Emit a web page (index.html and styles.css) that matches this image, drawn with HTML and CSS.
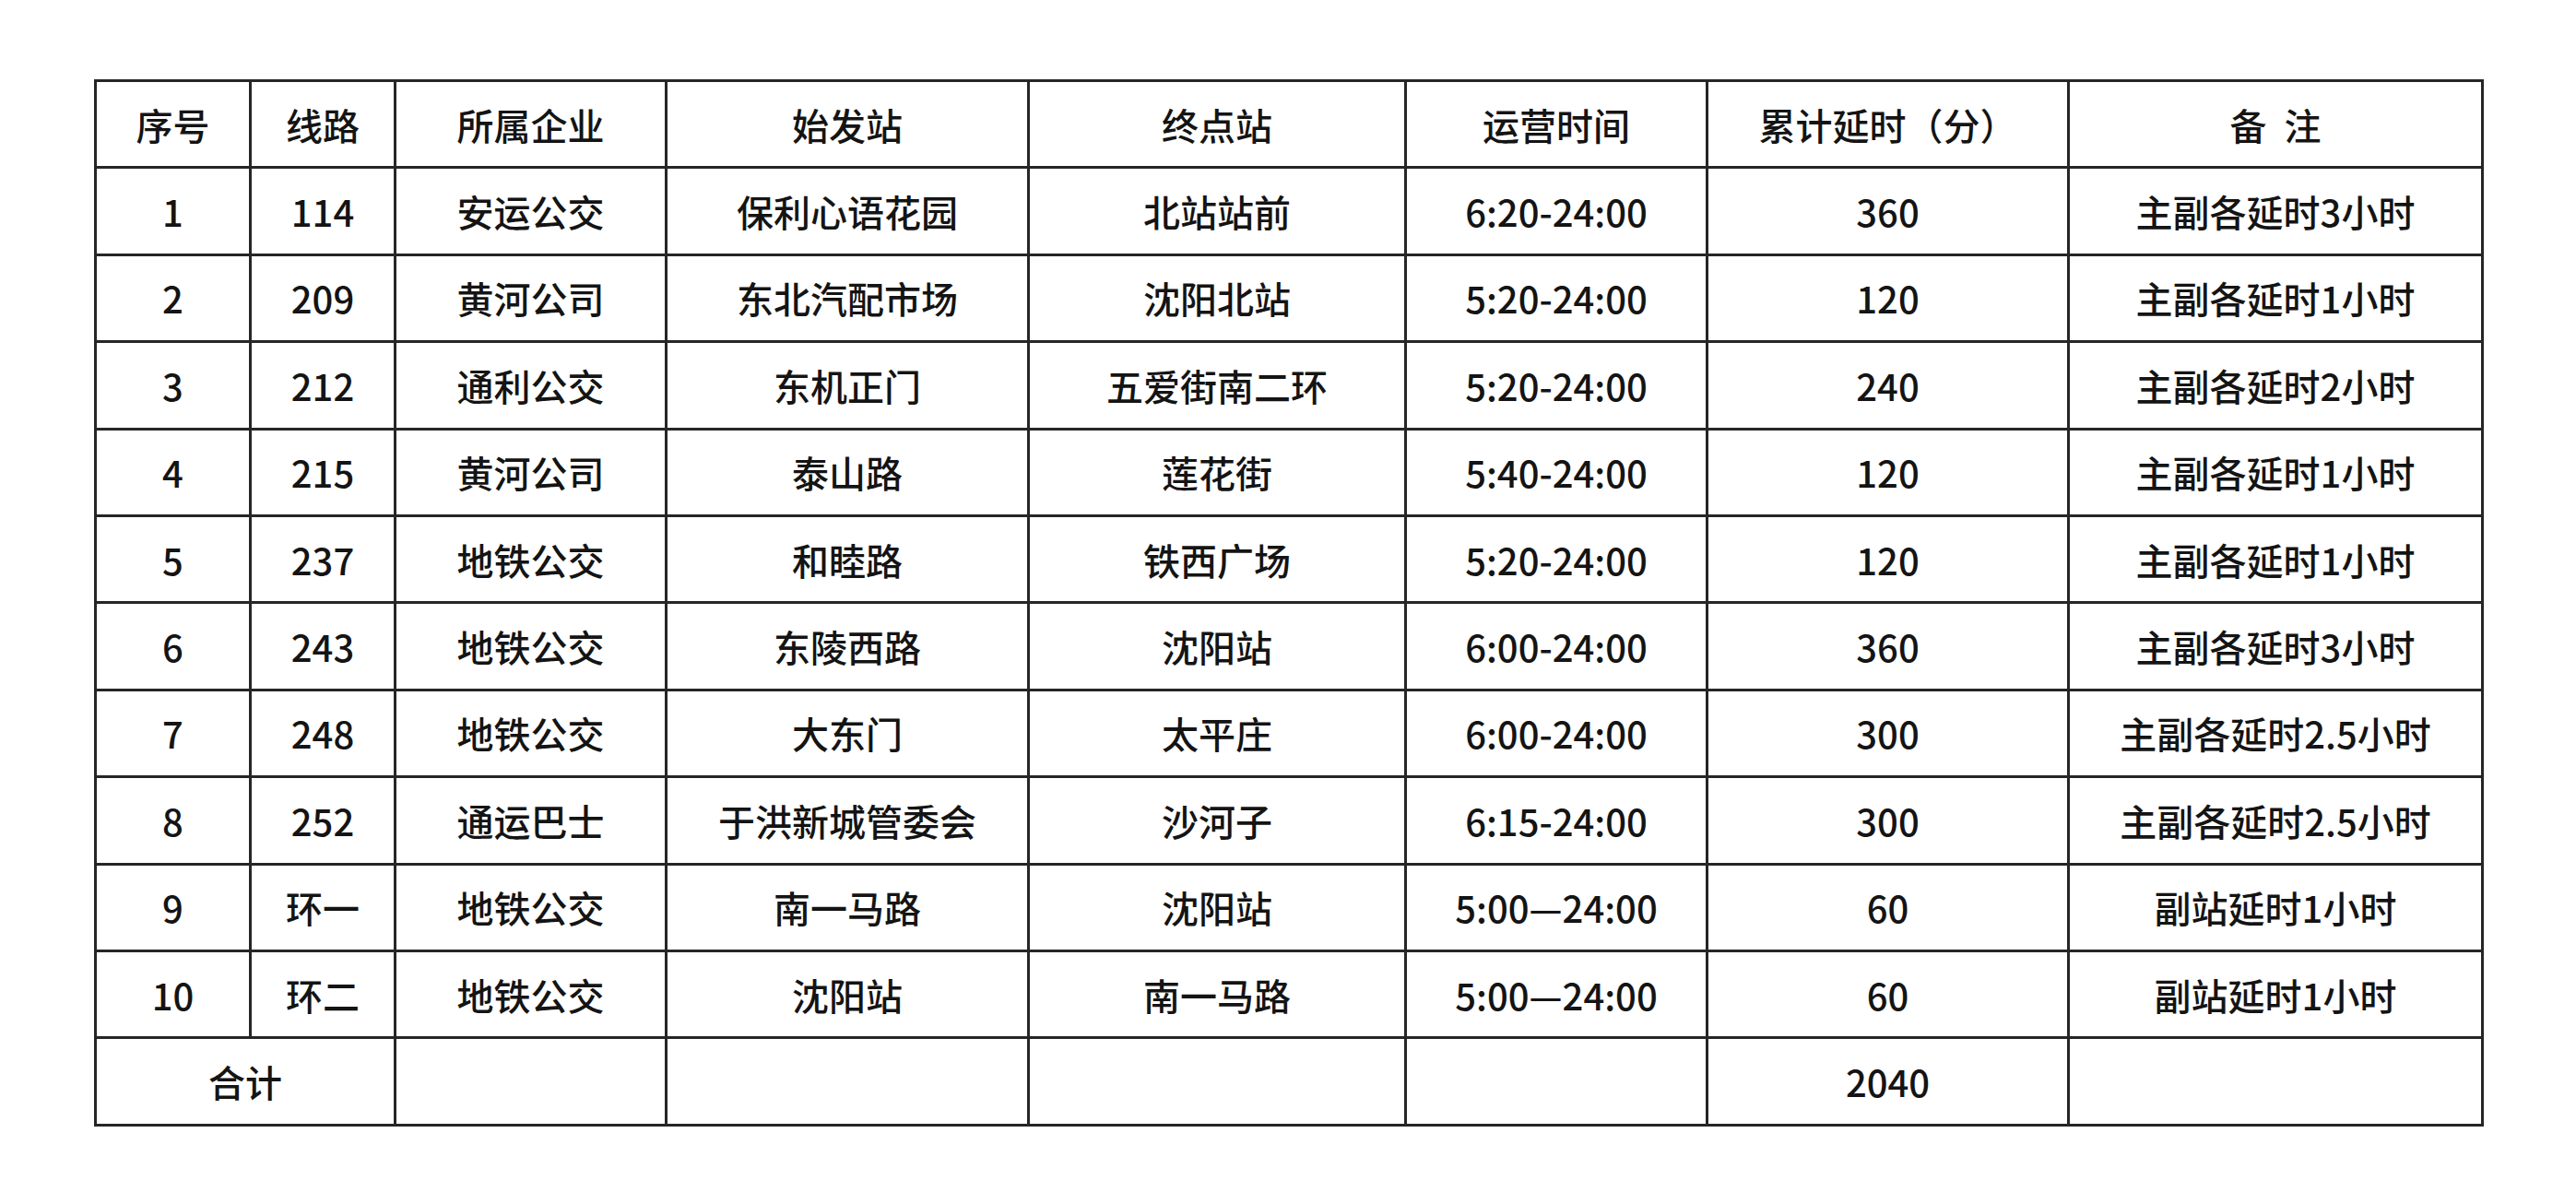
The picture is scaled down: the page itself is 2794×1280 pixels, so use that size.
FILE: index.html
```html
<!DOCTYPE html>
<html lang="zh-CN">
<head>
<meta charset="utf-8">
<title>线路延时统计</title>
<link rel="stylesheet" href="styles.css">
</head>
<body>
<div class="page">
<table class="sheet">
  <colgroup>
    <col class="c1"><col class="c2"><col class="c3"><col class="c4">
    <col class="c5"><col class="c6"><col class="c7"><col class="c8">
  </colgroup>
  <thead>
    <tr>
      <th>序号</th><th>线路</th><th>所属企业</th><th>始发站</th>
      <th>终点站</th><th>运营时间</th><th>累计延时（分）</th><th class="spaced">备 注</th>
    </tr>
  </thead>
  <tbody>
    <tr><td>1</td><td>114</td><td>安运公交</td><td>保利心语花园</td><td>北站站前</td><td>6:20-24:00</td><td>360</td><td>主副各延时3小时</td></tr>
    <tr><td>2</td><td>209</td><td>黄河公司</td><td>东北汽配市场</td><td>沈阳北站</td><td>5:20-24:00</td><td>120</td><td>主副各延时1小时</td></tr>
    <tr><td>3</td><td>212</td><td>通利公交</td><td>东机正门</td><td>五爱街南二环</td><td>5:20-24:00</td><td>240</td><td>主副各延时2小时</td></tr>
    <tr><td>4</td><td>215</td><td>黄河公司</td><td>泰山路</td><td>莲花街</td><td>5:40-24:00</td><td>120</td><td>主副各延时1小时</td></tr>
    <tr><td>5</td><td>237</td><td>地铁公交</td><td>和睦路</td><td>铁西广场</td><td>5:20-24:00</td><td>120</td><td>主副各延时1小时</td></tr>
    <tr><td>6</td><td>243</td><td>地铁公交</td><td>东陵西路</td><td>沈阳站</td><td>6:00-24:00</td><td>360</td><td>主副各延时3小时</td></tr>
    <tr><td>7</td><td>248</td><td>地铁公交</td><td>大东门</td><td>太平庄</td><td>6:00-24:00</td><td>300</td><td>主副各延时2.5小时</td></tr>
    <tr><td>8</td><td>252</td><td>通运巴士</td><td>于洪新城管委会</td><td>沙河子</td><td>6:15-24:00</td><td>300</td><td>主副各延时2.5小时</td></tr>
    <tr><td>9</td><td>环一</td><td>地铁公交</td><td>南一马路</td><td>沈阳站</td><td>5:00—24:00</td><td>60</td><td>副站延时1小时</td></tr>
    <tr><td>10</td><td>环二</td><td>地铁公交</td><td>沈阳站</td><td>南一马路</td><td>5:00—24:00</td><td>60</td><td>副站延时1小时</td></tr>
    <tr><td colspan="2">合计</td><td></td><td></td><td></td><td></td><td>2040</td><td></td></tr>
  </tbody>
</table>
</div>
</body>
</html>
```

FILE: styles.css
```css
html, body {
  margin: 0;
  padding: 0;
  background: #ffffff;
}

.page {
  padding: 86px 0 0 102px;
}

.sheet {
  border-collapse: collapse;
  table-layout: fixed;
  width: 2589px;
  border: 3px solid #262626;
  font-family: "Noto Sans CJK SC", "Noto Sans", sans-serif;
  font-size: 40px;
  font-weight: 500;
  color: #141414;
}

.c1 { width: 168px; }
.c2 { width: 157px; }
.c3 { width: 294px; }
.c4 { width: 393px; }
.c5 { width: 409px; }
.c6 { width: 327px; }
.c7 { width: 392px; }
.c8 { width: 449px; }

.sheet tr {
  height: 94.4px;
}

.sheet th,
.sheet td {
  border: 3px solid #262626;
  padding: 0;
  text-align: center;
  vertical-align: middle;
  font-weight: 500;
  line-height: 1;
  white-space: nowrap;
}

.spaced {
  word-spacing: 10px;
}
```
